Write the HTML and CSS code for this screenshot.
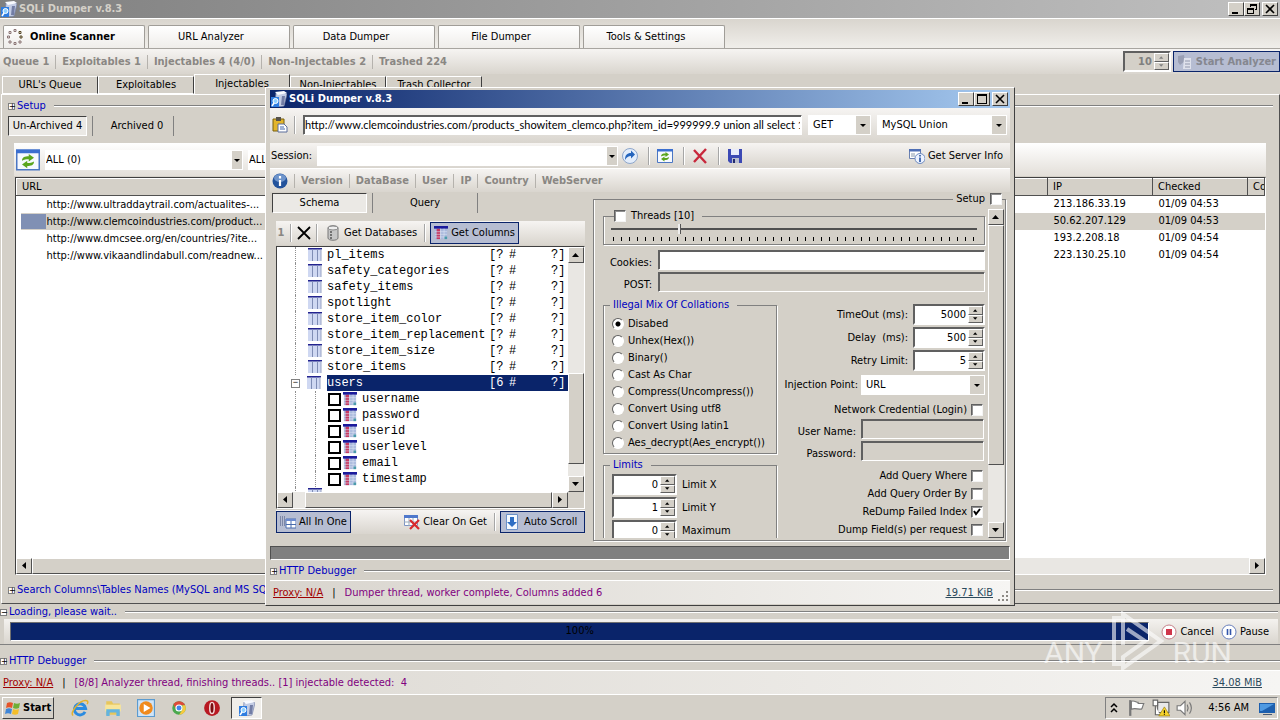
FILE: index.html
```html
<!DOCTYPE html>
<html lang="en">
<head>
  <meta charset="UTF-8">
  <meta name="viewport" content="width=device-width, initial-scale=1.0">
  <title>SQLi Dumper v.8.3</title>
  <link rel="stylesheet" href="styles.css">
</head>
<body>
  <svg class="defs" width="0" height="0" aria-hidden="true">
    <symbol id="i-app" viewBox="0 0 16 16"><path d="M5 2l8-1 3 2-3 12-7 1-2-3z" fill="#c3cce4" stroke="#7683a8" stroke-width=".7"/><path d="M4 1l9-1 3 2-9 2z" fill="#f8faff"/><path d="M11 5h3l-1 9h-3z" fill="#727da5"/><path d="M0 6h8v10H0z" fill="#2f7de0"/><circle cx="4.500" cy="10" r="2.500" fill="#8ed0ff" stroke="#fff"/><path d="M3 12l-2 3" stroke="#fff" stroke-width="1.500"/></symbol>
    <symbol id="i-refresh" viewBox="0 0 16 16"><path d="M.5 1.500h15v13H.5z" fill="#f6f9ff" stroke="#4b76c3"/><path d="M0 1h16v2.500H0z" fill="#3b6fd0"/><path d="M4 8.500c0-2.500 2-3 4.500-3V4L12 6.500 8.500 9V7.500C6.500 7.500 5.500 7.500 4 8.500zM12 9c0 2.500-2 3-4.500 3v1.500L4 11 7.500 8.500V10c2 0 3 0 4.500-1z" fill="#5aa51e"/></symbol>
    <symbol id="i-columns" viewBox="0 0 16 16"><path d="M1 1h14v14H1z" fill="#a9b8dc"/><path d="M3 3h4v12H3z" fill="#c63a62"/><path d="M0 0h16v3H0z" fill="#1b1b9c"/><path d="M7.500 3v12M11.500 3v12M1 6.500h14M1 9.500h14M1 12.500h14" stroke="#dde4f4" stroke-width=".7"/><path d="M12 12h3v3h-3z" fill="#4a9bab"/></symbol>
    <symbol id="i-table" viewBox="0 0 14 14"><path d="M0 1h13v12H0z" fill="#cfd8f2"/><path d="M0 0h14v1.500H0z" fill="#23238f"/><path d="M4.500 1v12M9.500 1v12" stroke="#7f8db5"/><path d="M13 1v12" stroke="#98a3c4"/></symbol>
    <symbol id="i-up" viewBox="0 0 8 4"><path d="M0 4h7L3.500 0z"/></symbol>
    <symbol id="i-down" viewBox="0 0 8 4"><path d="M0 0h7L3.500 4z"/></symbol>
    <symbol id="i-left" viewBox="0 0 4 8"><path d="M4 0v7L0 3.500z"/></symbol>
    <symbol id="i-right" viewBox="0 0 4 8"><path d="M0 0v7L4 3.500z"/></symbol>
    <symbol id="i-min" viewBox="0 0 10 10"><path d="M1 8h6v2H1z"/></symbol>
    <symbol id="i-max" viewBox="0 0 10 10"><path d="M0 0h10v10H0zM1 2v7h8V2z" fill-rule="evenodd"/></symbol>
    <symbol id="i-restore" viewBox="0 0 10 10"><path d="M3 0h7v6H8V5h1V2H4v1H3zM0 4h7v6H0zM1 6v3h5V6z" fill-rule="evenodd"/></symbol>
    <symbol id="i-close" viewBox="0 0 10 10"><path d="M1 1l8 8M9 1L1 9" stroke="#000" stroke-width="1.600"/></symbol>
  </svg>

  <!-- Main window -->
  <main class="app">
    <header class="titlebar inactive">
      <svg class="ic16"><use href="#i-app"/></svg>
      <h1>SQLi Dumper v.8.3</h1>
      <div class="win-btns">
        <button aria-label="Minimize"><svg><use href="#i-min"/></svg></button>
        <button aria-label="Restore"><svg><use href="#i-restore"/></svg></button>
        <button class="close" aria-label="Close"><svg><use href="#i-close"/></svg></button>
      </div>
    </header>

    <nav class="main-tabs">
      <button class="active"><svg class="ic16" viewBox="0 0 16 16"><g fill="none" stroke="#8a7474"><path d="M7 .5h2v2H7zM2 2.500h2v2H2zM.5 7h2v2h-2zM2 12h2v2H2zM7 13.500h2v2H7zM12 12h2v2h-2z"/><path d="M12 2.500h2v2h-2zM13 7h2v2h-2z" stroke="#542"/></g></svg>Online Scanner</button>
      <button>URL Analyzer</button>
      <button>Data Dumper</button>
      <button>File Dumper</button>
      <button>Tools &amp; Settings</button>
    </nav>

    <div class="counter-bar">
      <span>Queue 1</span><span>Exploitables 1</span><span>Injectables 4 (4/0)</span><span>Non-Injectables 2</span><span>Trashed 224</span>
      <div class="counter-actions">
        <div class="spin disabled"><input type="text" value="10" aria-label="Analyzer threads" disabled><div><button disabled aria-label="Up"><svg><use href="#i-up"/></svg></button><button disabled aria-label="Down"><svg><use href="#i-down"/></svg></button></div></div>
        <button class="tool-btn checked start-analyzer" disabled><svg class="ic16" viewBox="0 0 16 16"><path d="M1 2l6-1 1 6-5 4-2-3z" fill="#999fb4"/><path d="M7 4h7v11H6z" fill="#dfe2ec"/><path d="M8 7h5M8 10h5M8 13h5" stroke="#9298ad"/></svg>Start Analyzer</button>
      </div>
    </div>

    <nav class="sub-tabs">
      <button>URL's Queue</button>
      <button>Exploitables</button>
      <button class="active">Injectables</button>
      <button>Non-Injectables</button>
      <button>Trash Collector</button>
    </nav>

    <section class="tab-page">
      <div class="group-line"><button class="expander" aria-label="Expand">+</button><span>Setup</span></div>
      <div class="flat-tabs archive-tabs">
        <button class="active">Un-Archived 4</button>
        <button>Archived 0</button>
      </div>
      <div class="filter-bar">
        <button class="icon-btn" aria-label="Refresh"><svg class="ic24"><use href="#i-refresh"/></svg></button>
        <select class="combo slim filter-combo" aria-label="Filter"><option>ALL (0)</option></select>
        <select class="combo slim country-combo" aria-label="Country"><option>ALL</option></select>
      </div>
      <div class="list">
        <table>
          <thead>
            <tr><th class="c-url">URL</th><th></th><th class="c-ip">IP</th><th class="c-date">Checked</th><th class="c-last">Co</th></tr>
          </thead>
          <tbody>
            <tr><td><i class="flag"></i>http://www.ultraddaytrail.com/actualites-...</td><td></td><td>213.186.33.19</td><td>01/09 04:53</td><td></td></tr>
            <tr class="selected"><td><i class="flag"></i>http://www.clemcoindustries.com/product...</td><td></td><td>50.62.207.129</td><td>01/09 04:53</td><td></td></tr>
            <tr><td><i class="flag"></i>http://www.dmcsee.org/en/countries/?ite...</td><td></td><td>193.2.208.18</td><td>01/09 04:54</td><td></td></tr>
            <tr><td><i class="flag"></i>http://www.vikaandlindabull.com/readnew...</td><td></td><td>223.130.25.10</td><td>01/09 04:54</td><td></td></tr>
          </tbody>
        </table>
        <div class="hscroll"><button aria-label="Scroll left"><svg><use href="#i-left"/></svg></button><div class="thumb list-thumb"></div><div class="track"></div><button aria-label="Scroll right"><svg><use href="#i-right"/></svg></button></div>
      </div>
      <div class="group-line search-line"><button class="expander" aria-label="Expand">+</button><span>Search Columns\Tables Names (MySQL and MS SQL)</span></div>
    </section>

    <section class="loading">
      <div class="group-line"><button class="expander" aria-label="Collapse">−</button><span>Loading, please wait..</span></div>
      <div class="loading-row">
        <div class="bar">100%</div>
        <button class="tool-btn"><svg class="ic16" viewBox="0 0 16 16"><circle cx="8" cy="8" r="7" fill="#fff" stroke="#c5808a"/><path d="M5 5h6v6H5z" fill="#d0374b"/></svg>Cancel</button>
        <button class="tool-btn"><svg class="ic16" viewBox="0 0 16 16"><circle cx="8" cy="8" r="7" fill="#fff" stroke="#6a80bd"/><path d="M6.500 5v6M9.500 5v6" stroke="#3356ab" stroke-width="1.600"/></svg>Pause</button>
      </div>
    </section>

    <div class="group-line debug-line"><button class="expander" aria-label="Expand">+</button><span>HTTP Debugger</span></div>
    <footer class="statusbar">
      <a class="proxy" href="#">Proxy: N/A</a><span class="bar-sep">|</span><span class="msg">[8/8] Analyzer thread, finishing threads.. [1] injectable detected:&nbsp; 4</span><a class="size" href="#">34.08 MiB</a>
    </footer>
  </main>

  <!-- Dumper window -->
  <section class="dumper">
    <header class="titlebar">
      <svg class="ic16"><use href="#i-app"/></svg>
      <h2>SQLi Dumper v.8.3</h2>
      <div class="win-btns">
        <button aria-label="Minimize"><svg><use href="#i-min"/></svg></button>
        <button aria-label="Maximize"><svg><use href="#i-max"/></svg></button>
        <button class="close" aria-label="Close"><svg><use href="#i-close"/></svg></button>
      </div>
    </header>

    <div class="strip url-strip">
      <button class="icon-btn" aria-label="Paste"><svg class="ic16" viewBox="0 0 16 16"><path d="M1 2h11v12H1z" fill="#e3b52c" stroke="#79600f"/><path d="M4 0h5v4H4z" fill="#56524a"/><path d="M6 7h6l3 3v5H6z" fill="#fff" stroke="#5a6d9b"/><path d="M8 10h4M8 12h5" stroke="#3e64ac"/></svg></button>
      <i class="sep"></i>
      <input class="field url" type="text" aria-label="URL" value="http://www.clemcoindustries.com/products_showitem_clemco.php?item_id=999999.9 union all select 1,">
      <select class="combo method" aria-label="Method"><option>GET</option></select>
      <select class="combo engine" aria-label="Injection type"><option>MySQL Union</option></select>
    </div>
    <div class="strip session-strip">
      <label for="session">Session:</label>
      <select class="combo slim session" id="session"><option></option></select>
      <button class="icon-btn" aria-label="Go"><svg class="ic16" viewBox="0 0 16 16"><circle cx="8" cy="8" r="7.500" fill="#e3edfb" stroke="#8ea6ca"/><path d="M3 12c0-5 2-7 6-7V2.500L13 6.500 9 10.500V8c-3 0-4 1-6 4z" fill="#2565bd"/></svg></button>
      <i class="sep"></i>
      <button class="icon-btn" aria-label="Reload"><svg class="ic16"><use href="#i-refresh"/></svg></button>
      <i class="sep"></i>
      <button class="icon-btn" aria-label="Delete"><svg class="ic16" viewBox="0 0 16 16"><path d="M2 2l12 13M14 1L2 14" stroke="#c8283c" stroke-width="2.400"/></svg></button>
      <i class="sep"></i>
      <button class="icon-btn" aria-label="Save"><svg class="ic16" viewBox="0 0 16 16"><path d="M1 1h14v14H3l-2-2z" fill="#3c49b4"/><path d="M4 1h8v6H4z" fill="#e8ebfb"/><path d="M5 10h7v5H5z" fill="#b9bdcf"/><path d="M6 11h2v4H6z" fill="#222a6e"/></svg></button>
      <button class="tool-btn server-info"><svg class="ic16" viewBox="0 0 16 16"><path d="M.5 1.500h11v9H.5z" fill="#fff" stroke="#6a80b0"/><path d="M0 1h12v2.500H0z" fill="#4f6fb5"/><path d="M2 6h4M2 8h4" stroke="#89a"/><circle cx="11" cy="10.500" r="5" fill="#edf3ff" stroke="#6f8cc0"/><path d="M11 9.500V14M11 7v1.500" stroke="#2450a0" stroke-width="1.600"/></svg>Get Server Info</button>
    </div>
    <div class="strip info-strip">
      <svg class="ic16" viewBox="0 0 16 16"><circle cx="8" cy="8" r="7.500" fill="#23539c"/><ellipse cx="8" cy="5" rx="6" ry="4" fill="#6e94cb"/><path d="M8 7v6M8 3v2.500" stroke="#fff" stroke-width="2.200"/></svg>
      <span>Version</span><span>DataBase</span><span>User</span><span>IP</span><span>Country</span><span>WebServer</span>
    </div>

    <div class="panes">
      <div class="left-pane">
        <div class="flat-tabs schema-tabs">
          <button class="active">Schema</button>
          <button>Query</button>
        </div>
        <div class="schema">
          <div class="strip tree-strip">
            <b class="one">1</b>
            <i class="sep"></i>
            <button class="icon-btn" aria-label="Clear"><svg class="ic16" viewBox="0 0 16 16"><path d="M2 2l12 12M14 2L2 14" stroke="#000" stroke-width="1.800"/></svg></button>
            <i class="sep"></i>
            <button class="tool-btn"><svg class="ic16" viewBox="0 0 16 16"><path d="M3 3c0-3 10-3 10 0v10c0 3-10 3-10 0z" fill="#c6c6c6" stroke="#777"/><ellipse cx="8" cy="3" rx="5" ry="2" fill="#eee" stroke="#888"/><path d="M5 7h2M5 10h2M5 13h2" stroke="#555" stroke-width="1.500"/></svg>Get Databases</button>
            <i class="sep"></i>
            <button class="tool-btn checked"><svg class="ic14"><use href="#i-columns"/></svg>Get Columns</button>
          </div>
          <div class="tree">
            <ul class="nodes">
              <li><svg class="ic14"><use href="#i-table"/></svg><span>pl_items</span><span>[?</span><span>#</span><span>?]</span></li>
              <li><svg class="ic14"><use href="#i-table"/></svg><span>safety_categories</span><span>[?</span><span>#</span><span>?]</span></li>
              <li><svg class="ic14"><use href="#i-table"/></svg><span>safety_items</span><span>[?</span><span>#</span><span>?]</span></li>
              <li><svg class="ic14"><use href="#i-table"/></svg><span>spotlight</span><span>[?</span><span>#</span><span>?]</span></li>
              <li><svg class="ic14"><use href="#i-table"/></svg><span>store_item_color</span><span>[?</span><span>#</span><span>?]</span></li>
              <li><svg class="ic14"><use href="#i-table"/></svg><span>store_item_replacement</span><span>[?</span><span>#</span><span>?]</span></li>
              <li><svg class="ic14"><use href="#i-table"/></svg><span>store_item_size</span><span>[?</span><span>#</span><span>?]</span></li>
              <li><svg class="ic14"><use href="#i-table"/></svg><span>store_items</span><span>[?</span><span>#</span><span>?]</span></li>
              <li class="open"><button class="expander" aria-label="Collapse">−</button><svg class="ic14"><use href="#i-table"/></svg><span>users</span><span>[6</span><span>#</span><span>?]</span></li>
              <li class="col"><label><input type="checkbox"><svg class="ic14"><use href="#i-columns"/></svg>username</label></li>
              <li class="col"><label><input type="checkbox"><svg class="ic14"><use href="#i-columns"/></svg>password</label></li>
              <li class="col"><label><input type="checkbox"><svg class="ic14"><use href="#i-columns"/></svg>userid</label></li>
              <li class="col"><label><input type="checkbox"><svg class="ic14"><use href="#i-columns"/></svg>userlevel</label></li>
              <li class="col"><label><input type="checkbox"><svg class="ic14"><use href="#i-columns"/></svg>email</label></li>
              <li class="col"><label><input type="checkbox"><svg class="ic14"><use href="#i-columns"/></svg>timestamp</label></li>
              <li><svg class="ic14"><use href="#i-table"/></svg></li>
            </ul>
            <div class="vscroll"><button aria-label="Scroll up"><svg><use href="#i-up"/></svg></button><div class="track tree-track"></div><div class="thumb tree-thumb"></div><div class="track"></div><button aria-label="Scroll down"><svg><use href="#i-down"/></svg></button></div>
            <div class="hscroll"><button aria-label="Scroll left"><svg><use href="#i-left"/></svg></button><div class="track tree-left"></div><div class="thumb fill"></div><button aria-label="Scroll right"><svg><use href="#i-right"/></svg></button></div>
          </div>
          <div class="strip tree-strip bottom">
            <button class="tool-btn checked all-in-one"><svg class="ic16" viewBox="0 0 16 16"><path d="M0 3h6M0 5h6M0 7h6M0 9h6M0 11h6" stroke="#44527c" stroke-dasharray="1 1"/><path d="M6 5h10v9H6z" fill="#fff" stroke="#4a6cae"/><path d="M6 5h10v2H6z" fill="#6c8bd0"/><path d="M11 7v7M6 10.500h10" stroke="#4a6cae"/></svg>All In One</button>
            <button class="tool-btn clear-get"><svg class="ic16" viewBox="0 0 16 16"><path d="M.5 1.500h13v10H.5z" fill="#fff" stroke="#7d94c4"/><path d="M0 1h14v3H0z" fill="#4f78cc"/><path d="M5 4v8M9 4v8M0 8h14" stroke="#9ab"/><path d="M6 6l9 9M15 6l-9 9" stroke="#d9282c" stroke-width="2.200"/></svg>Clear On Get</button>
            <i class="sep"></i>
            <button class="tool-btn checked auto-scroll"><svg class="ic16" viewBox="0 0 16 16"><path d="M2.500.5h11v15h-11z" fill="#f4f9ff" stroke="#6b91c9"/><path d="M6 3h4v5h3l-5 5-5-5h3z" fill="#2f6fc4"/></svg>Auto Scroll</button>
          </div>
        </div>
      </div>

      <fieldset class="setup-box">
        <legend><label>Setup <input type="checkbox"></label></legend>
        <div class="setup-scroll">
          <div class="options">
            <fieldset class="threads">
              <legend><label><input type="checkbox"> Threads [10]</label></legend>
              <input type="range" min="1" max="50" value="10" aria-label="Threads">
              <div class="ticks"></div>
            </fieldset>
            <div class="wide-row"><label for="cookies">Cookies:</label><input class="field" type="text" id="cookies"></div>
            <div class="wide-row"><label for="post">POST:</label><input class="field" type="text" id="post" disabled></div>
            <div class="option-cols">
              <div class="col-left">
                <fieldset class="collations">
                  <legend>Illegal Mix Of Collations</legend>
                  <label><input type="radio" name="mix" checked>Disabed</label>
                  <label><input type="radio" name="mix">Unhex(Hex())</label>
                  <label><input type="radio" name="mix">Binary()</label>
                  <label><input type="radio" name="mix">Cast As Char</label>
                  <label><input type="radio" name="mix">Compress(Uncompress())</label>
                  <label><input type="radio" name="mix">Convert Using utf8</label>
                  <label><input type="radio" name="mix">Convert Using latin1</label>
                  <label><input type="radio" name="mix">Aes_decrypt(Aes_encrypt())</label>
                </fieldset>
                <fieldset class="limits">
                  <legend>Limits</legend>
                  <div class="limit-row"><div class="spin"><input type="text" id="limx" value="0"><div><button aria-label="Up"><svg><use href="#i-up"/></svg></button><button aria-label="Down"><svg><use href="#i-down"/></svg></button></div></div><label for="limx">Limit X</label></div>
                  <div class="limit-row"><div class="spin"><input type="text" id="limy" value="1"><div><button aria-label="Up"><svg><use href="#i-up"/></svg></button><button aria-label="Down"><svg><use href="#i-down"/></svg></button></div></div><label for="limy">Limit Y</label></div>
                  <div class="limit-row"><div class="spin"><input type="text" id="limm" value="0"><div><button aria-label="Up"><svg><use href="#i-up"/></svg></button><button aria-label="Down"><svg><use href="#i-down"/></svg></button></div></div><label for="limm">Maximum</label></div>
                </fieldset>
              </div>
              <div class="col-right">
                <div class="row"><label for="timeout">TimeOut (ms):</label><div class="spin"><input type="text" id="timeout" value="5000"><div><button aria-label="Up"><svg><use href="#i-up"/></svg></button><button aria-label="Down"><svg><use href="#i-down"/></svg></button></div></div></div>
                <div class="row"><label for="delay">Delay &nbsp;(ms):</label><div class="spin"><input type="text" id="delay" value="500"><div><button aria-label="Up"><svg><use href="#i-up"/></svg></button><button aria-label="Down"><svg><use href="#i-down"/></svg></button></div></div></div>
                <div class="row"><label for="retry">Retry Limit:</label><div class="spin"><input type="text" id="retry" value="5"><div><button aria-label="Up"><svg><use href="#i-up"/></svg></button><button aria-label="Down"><svg><use href="#i-down"/></svg></button></div></div></div>
                <div class="row point"><label for="point">Injection Point:</label><select class="combo" id="point"><option>URL</option></select></div>
                <label class="check-row cred">Network Credential (Login) <input type="checkbox"></label>
                <div class="row short"><label for="user">User Name:</label><input class="field" type="text" id="user" disabled></div>
                <div class="row short"><label for="pass">Password:</label><input class="field" type="text" id="pass" disabled></div>
                <div class="query-opts">
                  <label class="check-row">Add Query Where <input type="checkbox"></label>
                  <label class="check-row">Add Query Order By <input type="checkbox"></label>
                  <label class="check-row">ReDump Failed Index <input type="checkbox" checked></label>
                  <label class="check-row">Dump Field(s) per request <input type="checkbox"></label>
                  <input class="field per-request" type="text" aria-label="Fields per request" disabled>
                </div>
              </div>
            </div>
          </div>
          <div class="vscroll"><button aria-label="Scroll up"><svg><use href="#i-up"/></svg></button><div class="thumb setup-thumb"></div><div class="track"></div><button aria-label="Scroll down"><svg><use href="#i-down"/></svg></button></div>
        </div>
      </fieldset>
    </div>

    <div class="grey-bar"></div>
    <div class="group-line debug-line"><button class="expander" aria-label="Expand">+</button><span>HTTP Debugger</span></div>
    <footer class="statusbar">
      <a class="proxy" href="#">Proxy: N/A</a><span class="bar-sep">|</span><span class="msg">Dumper thread, worker complete, Columns added 6</span><a class="size" href="#">19.71 KiB</a>
      <svg class="grip" viewBox="0 0 12 12"><path d="M9 1h2v2H9zM5 5h2v2H5zM9 5h2v2H9zM1 9h2v2H1zM5 9h2v2H5zM9 9h2v2H9z" fill="#8d8a85"/></svg>
    </footer>
  </section>

  <!-- Taskbar -->
  <footer class="taskbar">
    <button class="start"><svg class="ic16" viewBox="0 0 16 16"><path d="M2 3c2-1 4-1 6 0L7 8C5 7 3 7 1 8z" fill="#e5542a"/><path d="M9 3c2 1 4 1 6 0l-1 5c-2 1-4 1-6 0z" fill="#6fae35"/><path d="M1 9c2-1 4-1 6 0l-1 5c-2-1-4-1-6 0z" fill="#3f86d8"/><path d="M8 9c2 1 4 1 6 0l-1 5c-2 1-4 1-6 0z" fill="#f4be2a"/></svg>Start</button>
    <button class="task" aria-label="Internet Explorer"><svg class="ic18" viewBox="0 0 16 16"><path d="M12.500 11.500A5 5 0 1 1 13 8.500H4" fill="none" stroke="#2a8be0" stroke-width="2.600"/><path d="M2 14.500C-2 13 8 0 14 1.500c1.500.5 1 2 .3 3" fill="none" stroke="#e3b12b" stroke-width="1.300"/></svg></button>
    <button class="task" aria-label="Explorer"><svg class="ic18" viewBox="0 0 16 16"><path d="M2 2h5l1 2h6v10H2z" fill="#e7c65a"/><path d="M1 5h14v6H1z" fill="#f7e59a"/><path d="M2 9h12v6h-3v-3H5v3H2z" fill="#63b4e0"/></svg></button>
    <button class="task" aria-label="Media Player"><svg class="ic18" viewBox="0 0 16 16"><path d="M.5.5h15v15H.5z" fill="#cfe4f7" stroke="#5b9bd0"/><circle cx="8" cy="8" r="6" fill="#f08a1c"/><path d="M6 4.500v7L12 8z" fill="#fff"/></svg></button>
    <button class="task" aria-label="Chrome"><svg class="ic18" viewBox="0 0 16 16"><circle cx="8" cy="8" r="6" fill="#4aa84e"/><path d="M3 4.600a6 6 0 0 1 10.500 1H8L5.500 9z" fill="#dd4b3a"/><path d="M13.500 5.600A6 6 0 0 1 8 14l3-4.500V5.600z" fill="#f7ca3e"/><circle cx="8" cy="8" r="2.700" fill="#4385ee" stroke="#fff"/></svg></button>
    <button class="task" aria-label="Opera"><svg class="ic18" viewBox="0 0 16 16"><circle cx="8" cy="8" r="7" fill="#b81922"/><ellipse cx="8" cy="8" rx="2" ry="5" fill="#7c0b10" stroke="#f3dada" stroke-width="1.300"/></svg></button>
    <button class="task current" aria-label="SQLi Dumper"><svg class="ic16"><use href="#i-app"/></svg></button>
    <div class="tray">
      <svg class="ic16" viewBox="0 0 16 16"><path d="M5 7l3-3 3 3M5 12l3-3 3 3" fill="none" stroke="#000" stroke-width="1.500"/></svg>
      <svg class="ic18" viewBox="0 0 16 16"><path d="M2 1v14" stroke="#777" stroke-width="2"/><path d="M3 2c3-1 4 1 6 1v1h5c-1 2-1 4-2 5-4 0-6-1-9 0z" fill="#fff" stroke="#777"/></svg>
      <svg class="ic18" viewBox="0 0 16 16"><path d="M5 3h10v9H5z" fill="#e9e9e9" stroke="#666"/><path d="M1 1h4v5H1zM3 6v8h4" fill="#fff" stroke="#666"/><path d="M11 7l5 8H6z" fill="#f6d32d" stroke="#9a7d0a" stroke-width=".6"/><path d="M11 10v2.500M11 13v1" stroke="#000"/></svg>
      <svg class="ic18" viewBox="0 0 16 16"><path d="M1 6h3l4-4v12l-4-4H1z" fill="#fff" stroke="#777"/><path d="M10 5c1 2 1 4 0 6M12 3c2 3 2 7 0 10" fill="none" stroke="#777"/></svg>
      <time>4:56 AM</time>
      <svg class="ic16" viewBox="0 0 16 16"><path d="M0 3h16v10H0z" fill="#1d5fae"/><path d="M1 4h14L3 11H1z" fill="#4f9ae2"/><path d="M4 14h9v1H4z" fill="#4a5b74"/></svg>
    </div>
  </footer>

  <div class="watermark" aria-hidden="true">
    <span>ANY</span>
    <svg viewBox="0 0 54 60"><path d="M10 7H3v46h7M12 34V3l38 27-38 27V46l22-16-18-12" fill="none" stroke="#fff" stroke-width="4"/></svg>
    <span>RUN</span>
  </div>
</body>
</html>
```

FILE: styles.css
```css
/* Global */
* { box-sizing: border-box; }
body {
  margin: 0;
  min-height: 100vh;
  display: flex;
  flex-direction: column;
  position: relative;
  overflow: hidden;
  background: #d4d0c8;
  color: #000;
  font: 11px/14px "DejaVu Sans Condensed", "DejaVu Sans", Tahoma, sans-serif;
}
button, input, select { font: inherit; color: inherit; margin: 0; padding: 0; border-radius: 0; }
button { background: none; border: 0; white-space: nowrap; }
h1, h2 { margin: 0; font-size: 11px; line-height: 16px; }
svg { flex: none; display: block; }
.defs { position: absolute; }
.ic14 { width: 14px; height: 14px; }
.ic16 { width: 16px; height: 16px; }
.ic18 { width: 18px; height: 18px; }
.ic24 { width: 24px; height: 24px; }

/* Title bars */
.titlebar {
  display: flex;
  align-items: center;
  gap: 2px;
  height: 18px;
  padding: 0 2px 0 1px;
  background: linear-gradient(to right, #0a246a, #a6caf0);
  color: #fff;
}
.titlebar.inactive { background: linear-gradient(to right, #808080, #c0c0c0); color: #d4d0c8; }
.win-btns { display: flex; margin-left: auto; }
.win-btns button {
  width: 16px;
  height: 14px;
  display: grid;
  place-items: center;
  background: #d4d0c8;
  border: 1px solid;
  border-color: #fff #404040 #404040 #fff;
}
.win-btns .close { margin-left: 2px; }
.win-btns svg { width: 10px; height: 10px; }

/* Shared controls */
.tool-btn { display: flex; align-items: center; gap: 3px; padding: 2px 3px; }
.tool-btn.checked { background: #b6bdd2; border: 1px solid #0a246a; }
.icon-btn { display: flex; }
.sep { width: 2px; height: 18px; border-left: 1px solid #a6a6a6; border-right: 1px solid #fff; }
.strip {
  display: flex;
  align-items: center;
  background: linear-gradient(#f6f4f2, #d9d5ce);
}
.field {
  min-width: 0;
  height: 20px;
  padding: 0 1px;
  background: #fff;
  border: 1px solid;
  border-color: #606060 #fff #fff #606060;
  box-shadow: inset 1px 1px #606060;
}
.field:disabled { background: #d4d0c8; }
.combo {
  appearance: none;
  height: 20px;
  padding: 0 18px 0 4px;
  border: 1px solid #fff;
  background: #fff url("data:image/svg+xml,%3Csvg xmlns='http://www.w3.org/2000/svg' width='14' height='18'%3E%3Cpath d='M0 0h14v18H0z' fill='%23d4d0c8'/%3E%3Cpath d='M4 8h6L7 11z'/%3E%3C/svg%3E") no-repeat right center;
}
.combo.slim {
  background-image: url("data:image/svg+xml,%3Csvg xmlns='http://www.w3.org/2000/svg' width='10' height='18'%3E%3Cpath d='M0 0h10v18H0z' fill='%23d4d0c8'/%3E%3Cpath d='M2 8h6L5 11z'/%3E%3C/svg%3E");
}
input[type="checkbox"] {
  appearance: none;
  width: 12px;
  height: 12px;
  background: #fff;
  border: 1px solid;
  border-color: #606060 #f4f4f4 #f4f4f4 #606060;
  box-shadow: inset 1px 1px #909090;
}
input[type="checkbox"]:checked {
  background: #fff url("data:image/svg+xml,%3Csvg xmlns='http://www.w3.org/2000/svg' width='10' height='10'%3E%3Cpath d='M2 4l2 3 4-5' fill='none' stroke='%23000' stroke-width='2'/%3E%3C/svg%3E") no-repeat center;
}
input[type="radio"] {
  appearance: none;
  width: 12px;
  height: 12px;
  border-radius: 50%;
  background: #fff;
  border: 1px solid;
  border-color: #606060 #fff #fff #606060;
}
input[type="radio"]:checked { background: radial-gradient(circle, #000 2px, #fff 3px); }
.spin {
  display: flex;
  height: 21px;
  background: #fff;
  border: 2px solid;
  border-color: #606060 #fff #fff #606060;
}
.spin input { flex: 1; min-width: 0; border: 0; background: none; text-align: right; padding-right: 2px; }
.spin > div { display: flex; flex-direction: column; width: 15px; background: #d4d0c8; }
.spin button {
  flex: 1;
  display: grid;
  place-items: center;
  border: 1px solid;
  border-color: #fff #606060 #606060 #fff;
}
.spin svg { width: 5px; height: 3px; }
.spin.disabled { background: #d4d0c8; color: #808080; fill: #808080; font-weight: bold; }
.expander {
  width: 7px;
  height: 7px;
  background: #fff;
  border: 1px solid #808080;
  font-size: 9px;
  line-height: 5px;
  display: grid;
  place-items: center;
}
.group-line { display: flex; align-items: center; gap: 2px; height: 14px; color: #0000c0; white-space: nowrap; }
.group-line .expander { color: #000; }
.group-line::after {
  content: "";
  flex: 1;
  margin-left: 6px;
  border-top: 1px solid #808080;
  border-bottom: 1px solid #fff;
}
.flat-tabs { display: flex; height: 20px; }
.flat-tabs button { border-left: 1px solid #808080; border-right: 1px solid #808080; }
.flat-tabs .active {
  border: 1px solid;
  border-color: #404040 #fff #fff #404040;
  background: #ebe9e5;
  margin-right: 5px;
}

/* Scrollbars */
.vscroll, .hscroll { display: flex; background: #e9e7e3; }
.vscroll { width: 16px; flex-direction: column; }
.hscroll { height: 16px; }
.vscroll button, .hscroll button, .thumb {
  flex: none;
  width: 16px;
  height: 16px;
  display: grid;
  place-items: center;
  background: #d4d0c8;
  border: 1px solid;
  border-color: #fff #505050 #505050 #fff;
}
.vscroll button svg { width: 8px; height: 4px; }
.hscroll button svg { width: 4px; height: 8px; }
.track { flex: 1; }
.thumb.fill { flex: 1; }

/* Main window */
.app { flex: 1; display: flex; flex-direction: column; min-width: 0; }
.main-tabs {
  display: flex;
  gap: 3px;
  height: 31px;
  padding: 6px 3px 0;
  background: linear-gradient(#d9d5ce, #f0eeea);
  border-top: 1px solid #fff;
  border-bottom: 1px solid #a8a5a0;
}
.main-tabs button {
  width: 142px;
  padding-right: 16px;
  background: linear-gradient(#fff, #efedea);
  border: 1px solid #a09d98;
  border-bottom: 0;
  border-radius: 2px 2px 0 0;
}
.main-tabs .active { display: flex; align-items: center; gap: 7px; padding: 0 3px; font-weight: bold; }
.counter-bar {
  display: flex;
  align-items: center;
  height: 25px;
  color: #8a8783;
  font-weight: bold;
  background: linear-gradient(#f6f4f2, #d9d5ce);
}
.counter-bar > span { padding: 0 6px; border-right: 1px solid #b5b2ad; }
.counter-bar > span:first-child { padding-left: 3px; }
.counter-bar > span:nth-child(5) { border: 0; }
.counter-actions { display: flex; gap: 2px; margin-left: auto; }
.counter-actions .spin { width: 48px; }
.counter-actions .tool-btn { height: 21px; color: #85878f; font-weight: bold; }
.sub-tabs { display: flex; align-items: flex-end; height: 20px; padding-left: 2px; }
.sub-tabs button {
  width: 96px;
  height: 18px;
  border: 1px solid;
  border-color: #fff #404040 #fff #fff;
}
.sub-tabs .active { height: 20px; padding-bottom: 2px; border-bottom: 0; }
.tab-page {
  flex: 1;
  display: flex;
  flex-direction: column;
  margin-left: 1px;
  padding: 4px 6px 6px;
  border: 1px solid;
  border-color: #fff #505050 #505050 #fff;
}
.archive-tabs { margin: 3px 0 7px; }
.archive-tabs button { width: 82px; padding-left: 8px; }
.archive-tabs .active { width: 79px; padding: 0; }
.filter-bar {
  display: flex;
  align-items: center;
  gap: 5px;
  height: 33px;
  margin: 0 7px 1px 6px;
  padding-left: 2px;
  background: linear-gradient(#fff, #e3dfd9);
}
.filter-combo { width: 198px; padding-left: 0; }
.country-combo { width: 150px; padding-left: 0; }
.list {
  flex: 1;
  display: flex;
  flex-direction: column;
  margin: 0 7px 8px;
  background: #fff;
  border: 1px solid;
  border-color: #404040 #fff #fff #404040;
}
.list table { width: 100%; table-layout: fixed; border-collapse: collapse; margin-bottom: auto; }
.list th {
  height: 17px;
  padding: 0 5px;
  text-align: left;
  font-weight: normal;
  background: #d4d0c8;
  border: 1px solid;
  border-color: #fff #505050 #505050 #fff;
}
.list td { height: 17px; padding: 0 6px; white-space: nowrap; overflow: hidden; }
.list td:first-child { padding: 0 0 0 4px; }
.c-url { width: 260px; }
.c-ip { width: 105px; }
.c-date { width: 95px; }
.c-last { width: 17px; overflow: hidden; }
.flag { display: inline-block; width: 25px; height: 15px; margin-right: 1px; vertical-align: middle; }
.list .selected { background: #d4d0c8; }
.list .selected td:first-child { background: linear-gradient(to right, #fff 4px, #d4d0c8 4px); }
.selected .flag { background: #8090b4; }
.list-thumb { width: 450px; }

.loading { padding: 1px 2px 0 0; height: 41px; border-bottom: 1px solid #808080; }
.loading-row {
  display: flex;
  align-items: center;
  gap: 1px;
  height: 25px;
  margin-left: 4px;
  padding: 0 6px;
  background: linear-gradient(#f4f2ef, #d9d5ce);
}
.bar {
  flex: 1;
  margin-right: 8px;
  height: 19px;
  line-height: 15px;
  text-align: center;
  background: #0a246a;
  border: 1px solid;
  border-color: #707070 #fff #fff #707070;
}
.app > .debug-line { margin: 9px 0 2px; }
.statusbar {
  display: flex;
  align-items: center;
  height: 24px;
  padding: 0 18px 0 3px;
  border-top: 1px solid #fff;
  background: linear-gradient(to right, #d8d4cd, #f6f5f3);
}
.proxy { color: #a00000; }
.bar-sep { margin: 0 9px; }
.msg { color: #800080; }
.size { margin-left: auto; color: #2c4a5c; }

/* Dumper window */
.dumper {
  position: absolute;
  top: 87px;
  left: 265px;
  right: 265px;
  bottom: 114px;
  display: flex;
  flex-direction: column;
  padding: 2px 4px 1px;
  background: #d4d0c8;
  border: 1px solid;
  border-color: #fff #404040 #404040 #fff;
}
.url-strip { height: 35px; gap: 6px; padding: 0 3px 2px 2px; }
.url { flex: 1; margin-left: 1px; font-family: Lato, sans-serif; }
.method { width: 63px; }
.engine { width: 130px; }
.session-strip { height: 25px; gap: 7px; padding: 0 5px 0 1px; }
.session-strip > label { margin-right: -2px; }
.session { width: 301px; }
.session-strip .session + .icon-btn { margin-left: -3px; }
.session-strip .icon-btn + .sep { margin-left: 3px; }
.server-info { margin-left: auto; padding-right: 2px; }
.info-strip { height: 24px; padding-left: 2px; color: #8a8783; font-weight: bold; border-top: 1px solid #fff; }
.info-strip svg { margin-right: 6px; }
.info-strip span { padding: 0 6px; border-left: 1px solid #b5b2ad; }

.panes { flex: 1; min-height: 0; display: flex; gap: 8px; padding-right: 4px; }
.left-pane { width: 315px; display: flex; flex-direction: column; }
.schema-tabs { margin: 1px 0 8px 2px; }
.schema-tabs .active { width: 95px; }
.schema-tabs button { width: 106px; }
.schema { flex: 1; min-height: 0; display: flex; flex-direction: column; margin-left: 6px; padding-bottom: 7px; }
.tree-strip { height: 24px; gap: 4px; flex: none; }
.tree-strip .tool-btn { height: 22px; }
.one { width: 10px; text-align: center; color: #8a8783; }
.tree {
  flex: 1;
  min-height: 0;
  display: grid;
  grid-template: minmax(0, 1fr) 16px / 1fr 16px;
  margin: 1px 0;
  border: 1px solid;
  border-color: #404040 #fff #fff #404040;
  background: #d4d0c8;
}
.nodes {
  margin: 0;
  padding: 0 0 0 18px;
  overflow: hidden;
  list-style: none;
  background: #fff;
  font: 12px/16px "Liberation Mono", monospace;
}
.nodes li {
  height: 16px;
  display: grid;
  grid-template-columns: 31px 162px 20px 42px 1fr;
  align-items: center;
  border-left: 1px dotted #909090;
}
.nodes li > svg { margin-left: 12px; }
.nodes li > span { white-space: pre; }
.nodes .open { grid-template-columns: 16px 20px 162px 20px 42px 1fr; margin-left: -4px; border: 0; }
.nodes .open .expander { width: 9px; height: 9px; }
.nodes .open > svg { margin-left: 0; }
.nodes .open > span { background: #0a246a; color: #fff; }
.nodes .col label {
  grid-column: 1 / -1;
  display: flex;
  align-items: center;
  gap: 2px;
  height: 16px;
  margin-left: 19px;
  padding-left: 12px;
  border-left: 1px dotted #909090;
}
.nodes .col svg { margin-right: 3px; }
.nodes input[type="checkbox"] { width: 13px; height: 13px; border: 2px solid #000; box-shadow: none; }
.tree-track { flex: none; height: 110px; }
.tree-thumb { height: 91px; }
.tree-left { flex: none; width: 12px; }
.tree .hscroll { grid-column: 1; }
.clear-get { margin-left: auto; }
.auto-scroll { width: 85px; gap: 4px; }

/* Setup options */
fieldset { min-width: 0; margin: 0; padding: 0; border: 1px solid #808080; box-shadow: 1px 1px #fff, inset 1px 0 #fff; }
.setup-box { flex: 1; height: 349px; }
.setup-box > legend { margin-left: auto; margin-right: 3px; padding-left: 3px; }
legend { padding: 0; }
legend label { display: flex; align-items: center; gap: 5px; }
.setup-scroll { display: flex; height: 333px; padding: 3px 1px 1px 9px; gap: 2px; }
.options { flex: 1; min-width: 0; overflow: hidden; padding-right: 1px; }
.threads { height: 36px; }
.threads legend { margin-left: 10px; padding-right: 8px; }
.threads input[type="range"] {
  appearance: none;
  display: block;
  width: calc(100% - 14px);
  height: 12px;
  margin: 0 7px;
  background: linear-gradient(#505050, #505050) center / 100% 2px no-repeat;
}
.threads input[type="range"]::-webkit-slider-thumb {
  appearance: none;
  width: 3px;
  height: 10px;
  background: #eee;
  border-right: 1px solid #555;
}
.ticks { height: 4px; margin: 2px 7px 0 9px; background: repeating-linear-gradient(to right, #000 0 1px, transparent 1px 8px); }
.wide-row { display: flex; align-items: center; gap: 6px; margin-top: 2px; }
.wide-row label { width: 49px; padding-top: 6px; text-align: right; }
.wide-row .field { flex: 1; }
.threads + .wide-row { margin-top: 5px; }
.option-cols { display: flex; justify-content: space-between; padding-top: 6px; }
.col-left { width: 175px; padding-right: 1px; }
.col-left fieldset > legend { margin-left: -2px; padding: 0 8px 0 3px; color: #0000c0; }
.collations { padding: 3px 8px 2px; }
.collations > label { display: flex; align-items: center; gap: 4px; height: 17px; white-space: nowrap; }
.limits { margin-top: 4px; padding: 2px 8px 20px; }
.limit-row { display: flex; align-items: center; gap: 5px; margin-bottom: 2px; }
.limit-row .spin { width: 65px; }
.col-right { padding-top: 6px; width: 205px; }
.row { display: flex; align-items: center; justify-content: flex-end; gap: 5px; margin-bottom: 2px; white-space: nowrap; }
.row .spin { width: 72px; }
.row.point { margin-top: 4px; gap: 3px; }
.row .combo { width: 124px; }
.row .field { width: 123px; }
.row.short { margin-right: 1px; }
.row.short label { padding-top: 5px; }
.check-row { display: flex; align-items: center; justify-content: flex-end; gap: 4px; height: 18px; white-space: nowrap; padding-right: 2px; }
.cred { margin-top: 6px; }
.query-opts { margin-top: 6px; }
.per-request { display: block; margin-left: auto; width: 74px; }
.setup-thumb { height: 240px; }

.grey-bar {
  height: 14px;
  margin-top: 5px;
  background: #808080;
  border: 1px solid;
  border-color: #505050 #fff #fff #505050;
}
.dumper .debug-line { margin: 4px 0 2px; }
.dumper .statusbar { padding: 0 1px 0 3px; }
.grip { width: 12px; height: 12px; margin: 6px 0 0 4px; }

/* Taskbar */
.taskbar {
  display: flex;
  align-items: center;
  gap: 15px;
  height: 26px;
  padding: 1px 2px;
  border-top: 1px solid #fff;
}
.start {
  display: flex;
  align-items: center;
  gap: 2px;
  width: 52px;
  height: 22px;
  padding: 0 2px;
  margin-right: 2px;
  font-weight: bold;
  border: 1px solid;
  border-color: #fff #404040 #404040 #fff;
}
.task.current {
  display: grid;
  place-items: center;
  width: 31px;
  height: 22px;
  margin-left: -5px;
  background: #f0eeea;
  border: 1px solid;
  border-color: #404040 #fff #fff #404040;
}
.tray {
  display: flex;
  align-items: center;
  gap: 6px;
  height: 22px;
  margin-left: auto;
  padding: 0 2px 0 0;
  border: 1px solid;
  border-color: #808080 #fff #fff #808080;
}
.tray time { margin: 0 4px 0 8px; }

/* Watermark */
.watermark {
  position: absolute;
  right: 48px;
  bottom: 49px;
  display: flex;
  align-items: flex-end;
  gap: 8px;
  opacity: .6;
  pointer-events: none;
  color: #fff;
  font: 30px/24px Roboto, sans-serif;
}
.watermark span { padding-bottom: 6px; }
.watermark svg { width: 54px; height: 60px; }
```
